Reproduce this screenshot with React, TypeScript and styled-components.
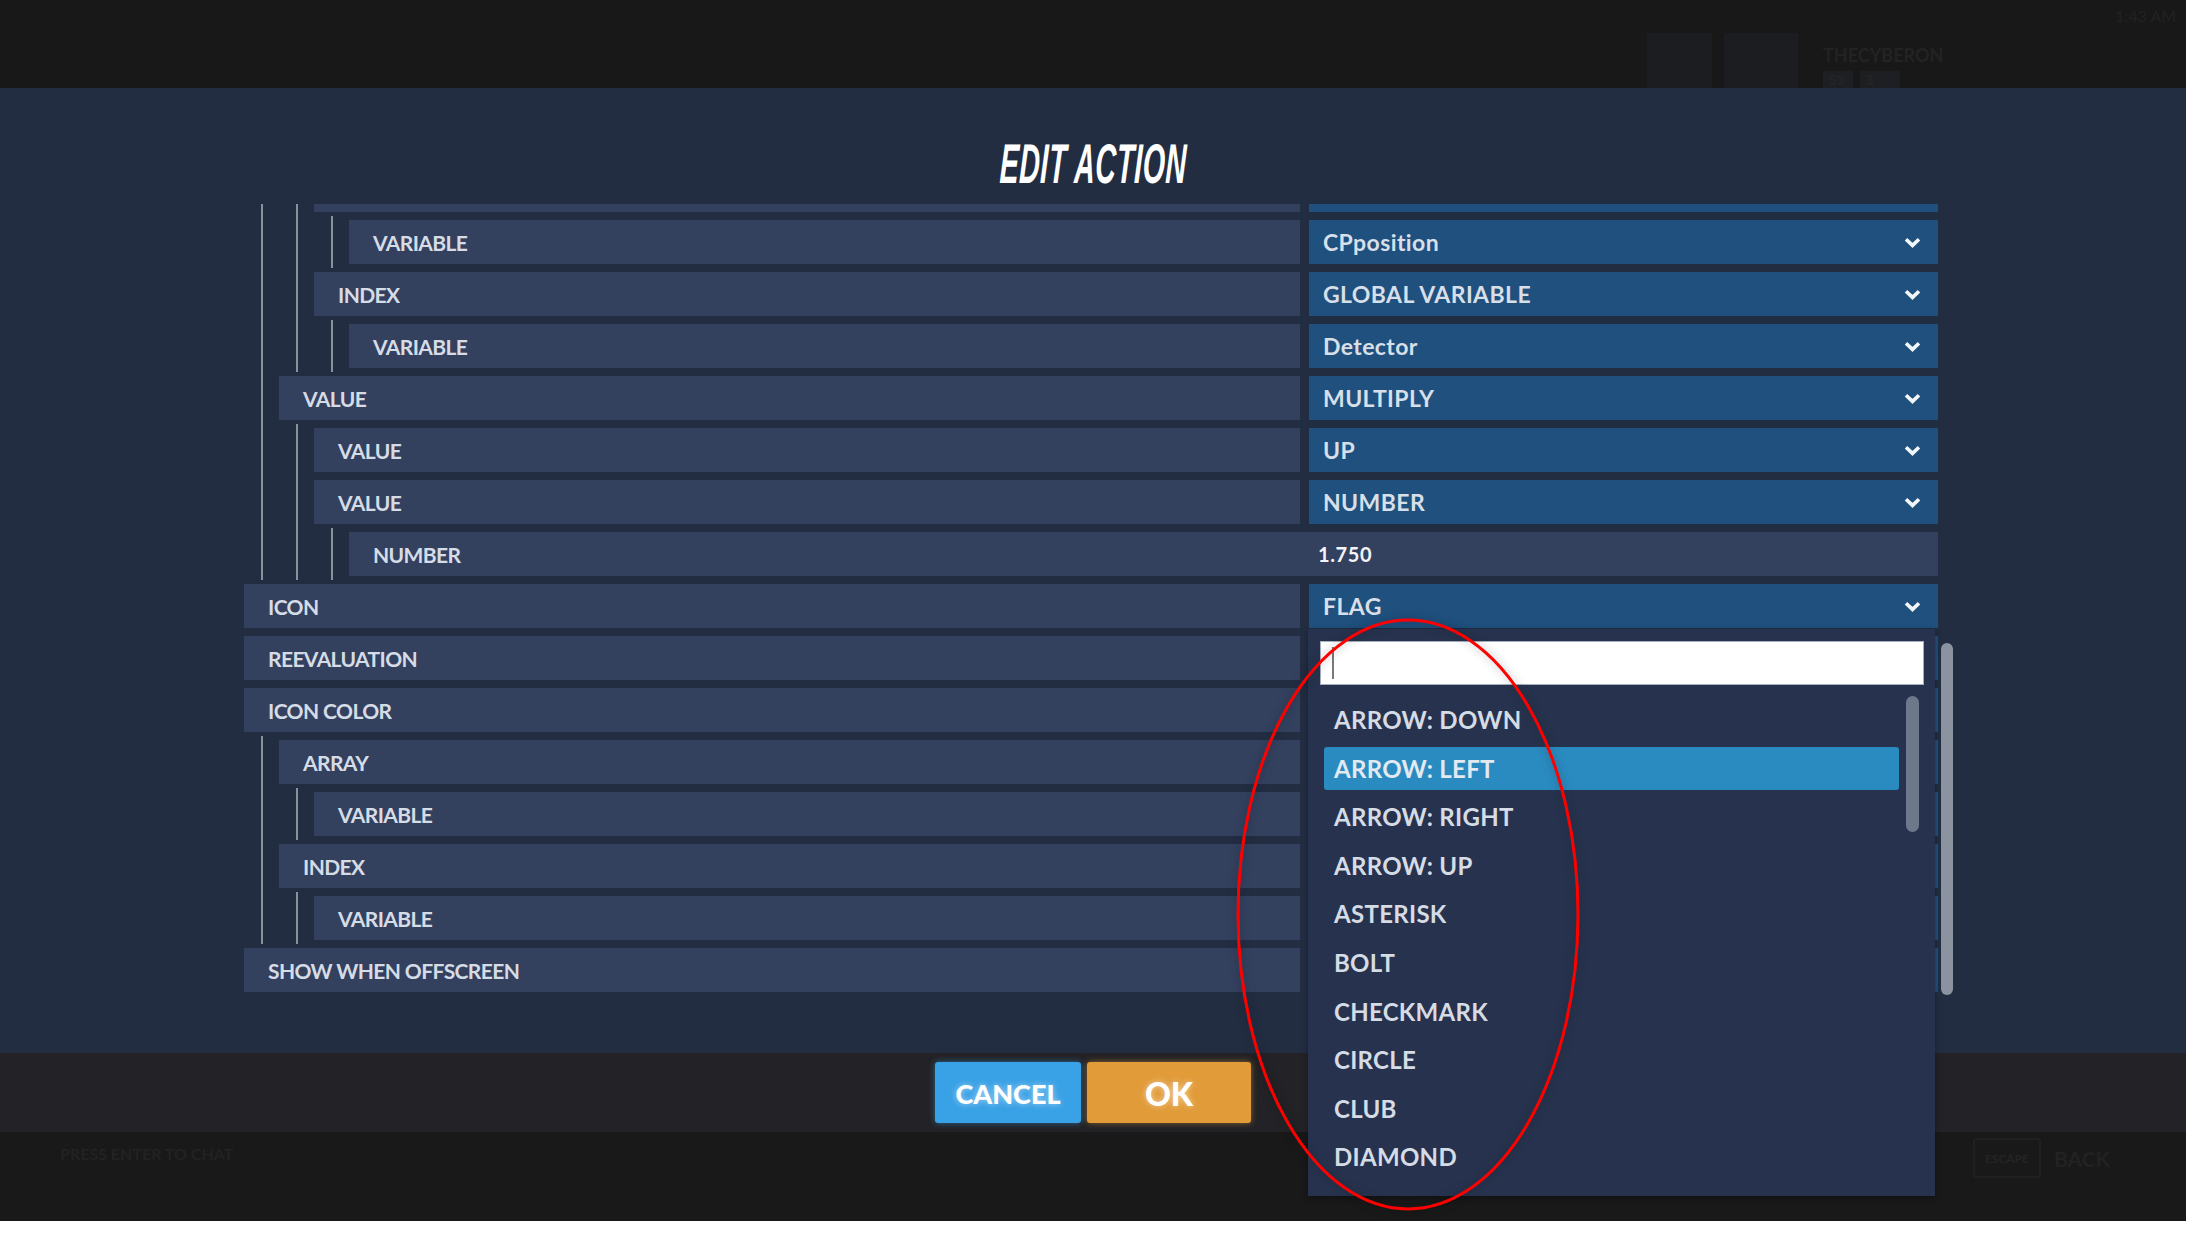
import styled, { createGlobalStyle } from "styled-components";

const GlobalStyle = createGlobalStyle`
  html, body {
    margin: 0;
    padding: 0;
    background: #ffffff;
  }
  body {
    font-family: Lato, "Noto Sans", sans-serif;
  }
  * {
    box-sizing: border-box;
  }
`;

const Screen = styled.div`
  position: relative;
  width: 2186px;
  height: 1221px;
  display: flex;
  flex-direction: column;
  overflow: hidden;
  background: #191919;
`;

/* ---------- top bar (dimmed behind the modal) ---------- */

const TopBar = styled.div`
  height: 88px;
  flex-shrink: 0;
  background: #181818;
  display: flex;
  justify-content: flex-end;
  align-items: flex-start;
  padding-right: 14px;
`;

const Avatar = styled.div<{ $w: number; $gap: number }>`
  width: ${(p) => p.$w}px;
  height: 55px;
  margin-top: 33px;
  margin-right: ${(p) => p.$gap}px;
  background: #1b1d20;
`;

const NameBlock = styled.div`
  width: 116px;
  margin-top: 44px;
  margin-right: 176px;
  display: flex;
  flex-direction: column;
  gap: 5px;
`;

const Name = styled.div`
  font-weight: 700;
  font-size: 18px;
  color: #232323;
`;

const Badges = styled.div`
  display: flex;
  gap: 7px;
`;

const Badge = styled.div<{ $w: number }>`
  width: ${(p) => p.$w}px;
  height: 18px;
  background: #1d1f22;
  color: #252525;
  font-size: 13px;
  font-weight: 700;
  padding-left: 6px;
  line-height: 18px;
`;

const Clock = styled.div`
  width: 57px;
  margin-top: 6px;
  font-size: 16px;
  color: #222222;
  white-space: nowrap;
`;

/* ---------- modal panel ---------- */

const Panel = styled.div`
  position: relative;
  height: 965px;
  flex-shrink: 0;
  background: #232d42;
  padding-top: 48px;
  display: flex;
  flex-direction: column;
`;

const Title = styled.h1`
  margin: 0;
  height: 56px;
  text-align: center;
`;

const TitleText = styled.span`
  display: inline-block;
  font-family: "Liberation Sans", Arial, sans-serif;
  font-weight: 700;
  font-style: italic;
  font-size: 56px;
  line-height: 56px;
  color: #ffffff;
  transform: scaleX(0.51) skewX(-4deg);
  letter-spacing: 1px;
`;

const Viewport = styled.div`
  margin-top: 12px;
  margin-left: 244px;
  width: 1709px;
  height: 796px;
  display: flex;
  gap: 3px;
`;

const FormClip = styled.div`
  flex: 1;
  overflow: hidden;
`;

const Tree = styled.div`
  margin-top: -140px;
  display: flex;
  flex-direction: column;
  gap: 8px;
`;

const ChildGroup = styled.div`
  display: flex;
  flex-direction: column;
  gap: 8px;
  margin: -4px 0 -4px 17px;
  padding: 4px 0 4px 16px;
  border-left: 2px solid #8b919c;
`;

const Row = styled.div<{ $inline?: boolean }>`
  height: 44px;
  display: flex;
  gap: 9px;
  background: ${(p) => (p.$inline ? "#33415f" : "transparent")};
`;

const Label = styled.div`
  flex: 1;
  display: flex;
  align-items: center;
  padding-left: 24px;
  background: #33415f;
  color: #d6dce6;
  font-weight: 700;
  font-size: 21px;
  letter-spacing: -0.6px;
`;

const Select = styled.div`
  width: 629px;
  flex-shrink: 0;
  display: flex;
  align-items: center;
  justify-content: space-between;
  padding: 0 17px 0 14px;
  background: #1f507e;
  color: #d7dfe9;
  font-weight: 700;
  font-size: 23px;
  letter-spacing: 0.4px;
`;

const NumberField = styled.div`
  width: 629px;
  flex-shrink: 0;
  display: flex;
  align-items: center;
  padding-left: 9px;
  color: #f2f4f7;
  font-weight: 700;
  font-size: 20px;
  letter-spacing: 0.6px;
`;

const ScrollTrack = styled.div`
  width: 12px;
  flex-shrink: 0;
`;

const ScrollThumb = styled.div<{ $top: number; $h: number; $color: string }>`
  margin-top: ${(p) => p.$top}px;
  height: ${(p) => p.$h}px;
  border-radius: 7px;
  background: ${(p) => p.$color};
`;

/* ---------- dropdown menu ---------- */

const Dropdown = styled.div`
  position: absolute;
  top: 541px;
  left: 1308px;
  width: 627px;
  height: 567px;
  z-index: 5;
  background: #27334e;
  box-shadow: 0 2px 6px rgba(0, 0, 0, 0.35);
  padding: 12px 11px 0 12px;
`;

const SearchBox = styled.div`
  height: 44px;
  background: #ffffff;
  border: 1px solid #a7afbc;
  display: flex;
  align-items: center;
  padding-left: 11px;
`;

const Caret = styled.div`
  width: 2px;
  height: 32px;
  background: #7a7a7a;
`;

const ListArea = styled.div`
  margin-top: 11px;
  display: flex;
  align-items: flex-start;
`;

const Items = styled.div`
  width: 575px;
  margin-left: 4px;
  margin-right: 7px;
  padding-top: 2px;
  display: flex;
  flex-direction: column;
  gap: 5.6px;
`;

const Item = styled.div<{ $active?: boolean }>`
  height: 43px;
  display: flex;
  align-items: center;
  padding-left: 10px;
  border-radius: 3px;
  background: ${(p) => (p.$active ? "#2a8bc0" : "transparent")};
  color: ${(p) => (p.$active ? "#e2e9f0" : "#d6dce5")};
  font-weight: 700;
  font-size: 24px;
  letter-spacing: 0.3px;
`;

const ListScroll = styled.div`
  width: 13px;
  flex-shrink: 0;
`;

/* ---------- footer ---------- */

const Footer = styled.div`
  height: 79px;
  flex-shrink: 0;
  background: #232226;
  display: flex;
  justify-content: center;
  align-items: center;
  gap: 6px;
`;

const Button = styled.button<{ $w: number; $bg: string; $size: number }>`
  width: ${(p) => p.$w}px;
  height: 61px;
  border: none;
  border-radius: 3px;
  background: ${(p) => p.$bg};
  box-shadow: 0 0 6px ${(p) => p.$bg}88;
  color: #ffffff;
  font-family: Lato, sans-serif;
  font-weight: 900;
  font-size: ${(p) => p.$size}px;
  text-shadow: 0 0 6px rgba(255, 255, 255, 0.55);
  padding: 0;
  padding-top: 2px;
`;

const BottomBar = styled.div`
  height: 89px;
  flex-shrink: 0;
  background: #191919;
  display: flex;
  justify-content: space-between;
  align-items: flex-start;
  padding: 0 76px 0 60px;
`;

const ChatHint = styled.div`
  margin-top: 12px;
  font-weight: 700;
  font-size: 16px;
  color: #222222;
`;

const BackHint = styled.div`
  margin-top: 6px;
  display: flex;
  align-items: center;
  gap: 13px;
`;

const KeyBox = styled.div`
  width: 68px;
  height: 40px;
  border: 2px solid #202020;
  border-radius: 3px;
  display: flex;
  align-items: center;
  justify-content: center;
  font-size: 12px;
  font-weight: 700;
  color: #242424;
`;

const BackText = styled.div`
  font-size: 21px;
  font-weight: 700;
  color: #222222;
`;

const Annotation = styled.svg`
  position: absolute;
  left: 1233px;
  top: 615px;
  z-index: 10;
  pointer-events: none;
  filter: drop-shadow(0 0 5px rgba(0, 0, 0, 0.3));
`;

// rows scrolled out of view above, or covered by the open menu, carry no text
type Node = {
  label?: string;
  value?: string;
  number?: string;
  children?: Node[];
};

const tree: Node[] = [
  {
    children: [
      {
        children: [
          {
            children: [{ label: "VARIABLE", value: "CPposition" }],
          },
          {
            label: "INDEX",
            value: "GLOBAL VARIABLE",
            children: [{ label: "VARIABLE", value: "Detector" }],
          },
        ],
      },
      {
        label: "VALUE",
        value: "MULTIPLY",
        children: [
          { label: "VALUE", value: "UP" },
          {
            label: "VALUE",
            value: "NUMBER",
            children: [{ label: "NUMBER", number: "1.750" }],
          },
        ],
      },
    ],
  },
  { label: "ICON", value: "FLAG" },
  { label: "REEVALUATION" },
  {
    label: "ICON COLOR",
    children: [
      { label: "ARRAY", children: [{ label: "VARIABLE" }] },
      { label: "INDEX", children: [{ label: "VARIABLE" }] },
    ],
  },
  { label: "SHOW WHEN OFFSCREEN" },
];

const options = [
  "ARROW: DOWN",
  "ARROW: LEFT",
  "ARROW: RIGHT",
  "ARROW: UP",
  "ASTERISK",
  "BOLT",
  "CHECKMARK",
  "CIRCLE",
  "CLUB",
  "DIAMOND",
];

function Chevron() {
  return (
    <svg width="17" height="11" viewBox="0 0 17 11">
      <path
        d="M2 2.2 L8.5 8.4 L15 2.2"
        fill="none"
        stroke="#f3f6f9"
        strokeWidth="3.6"
        strokeLinejoin="miter"
      />
    </svg>
  );
}

function TreeNode({ node }: { node: Node }) {
  return (
    <>
      <Row $inline={!!node.number}>
        <Label>{node.label}</Label>
        {node.number ? (
          <NumberField>{node.number}</NumberField>
        ) : (
          <Select>
            {node.value && (
              <>
                <span>{node.value}</span>
                <Chevron />
              </>
            )}
          </Select>
        )}
      </Row>
      {node.children && (
        <ChildGroup>
          {node.children.map((child, i) => (
            <TreeNode key={i} node={child} />
          ))}
        </ChildGroup>
      )}
    </>
  );
}

export default function App() {
  return (
    <>
      <GlobalStyle />
      <Screen>
        <TopBar>
          <Avatar $w={65} $gap={12} />
          <Avatar $w={74} $gap={25} />
          <NameBlock>
            <Name>THECYBERON</Name>
            <Badges>
              <Badge $w={30}>53</Badge>
              <Badge $w={40}>3</Badge>
            </Badges>
          </NameBlock>
          <Clock>1:43 AM</Clock>
        </TopBar>

        <Panel>
          <Title>
            <TitleText>EDIT ACTION</TitleText>
          </Title>
          <Viewport>
            <FormClip>
              <Tree>
                {tree.map((node, i) => (
                  <TreeNode key={i} node={node} />
                ))}
              </Tree>
            </FormClip>
            <ScrollTrack>
              <ScrollThumb $top={439} $h={352} $color="#8c93a0" />
            </ScrollTrack>
          </Viewport>

          <Dropdown>
            <SearchBox>
              <Caret />
            </SearchBox>
            <ListArea>
              <Items>
                {options.map((o) => (
                  <Item key={o} $active={o === "ARROW: LEFT"}>
                    {o}
                  </Item>
                ))}
              </Items>
              <ListScroll>
                <ScrollThumb $top={0} $h={136} $color="#6d788b" />
              </ListScroll>
            </ListArea>
          </Dropdown>
        </Panel>

        <Footer>
          <Button $w={146} $bg="#39a1e6" $size={27}>
            CANCEL
          </Button>
          <Button $w={164} $bg="#e19b38" $size={32}>
            OK
          </Button>
        </Footer>

        <BottomBar>
          <ChatHint>PRESS ENTER TO CHAT</ChatHint>
          <BackHint>
            <KeyBox>ESCAPE</KeyBox>
            <BackText>BACK</BackText>
          </BackHint>
        </BottomBar>

        <Annotation width="350" height="600" viewBox="0 0 350 600">
          <ellipse
            cx="175"
            cy="299.5"
            rx="170"
            ry="294.5"
            fill="none"
            stroke="#ff0000"
            strokeWidth="3"
          />
        </Annotation>
      </Screen>
    </>
  );
}
